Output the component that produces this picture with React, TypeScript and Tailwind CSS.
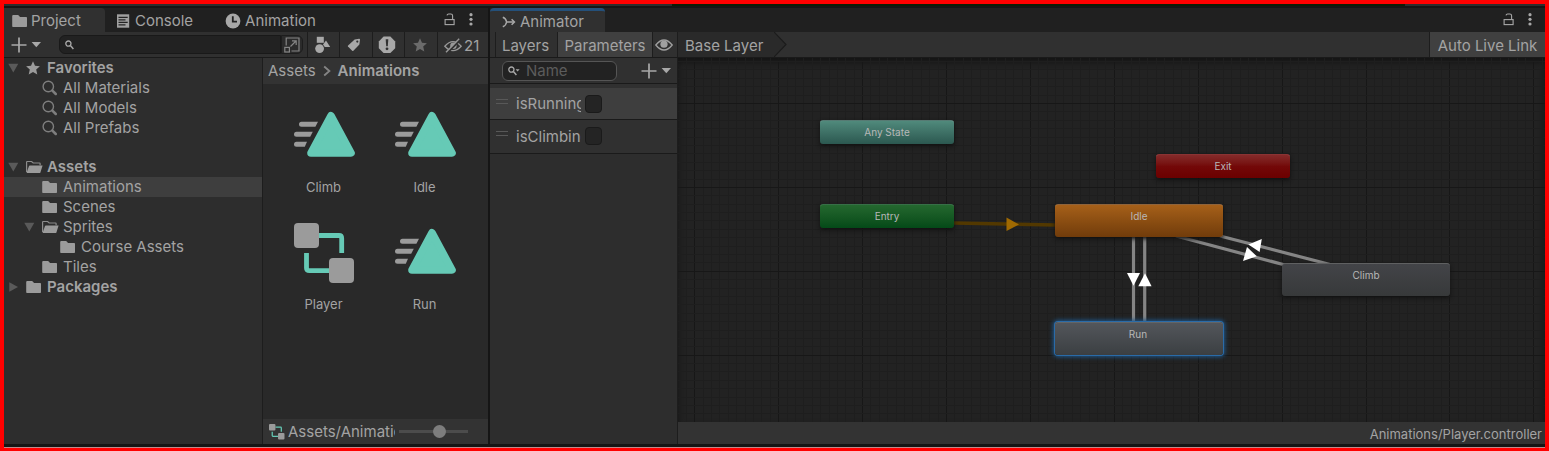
import type { ReactNode } from "react";

const FolderIcon = () => (
  <svg width="16" height="14" viewBox="0 0 16 14" fill="#9b9b9b">
    <path d="M0.2 2Q0.2 1 1.2 1H5.8Q6.4 1 6.8 1.5L8 3H14.2Q15 3 15 3.8V12.2Q15 13 14.2 13H1Q0.2 13 0.2 12.2Z" />
  </svg>
);

const FolderOpenIcon = () => (
  <svg width="17" height="14" viewBox="0 0 17 14" fill="none">
    <path d="M0.6 12V2Q0.6 1.5 1.1 1.5H5.6L7.2 3H13.6Q14.1 3 14.1 3.5V5.3" stroke="#8c8c8c" strokeWidth="1.2" />
    <path d="M3.8 5.5H16.6L14.4 12.4Q14.2 13 13.6 13H0.8Q0.5 13 0.8 12.2L3 6Q3.2 5.5 3.8 5.5Z" fill="#9b9b9b" />
  </svg>
);

const LensIcon = () => (
  <svg width="16" height="16" viewBox="0 0 16 16" fill="none" stroke="#7e7e7e">
    <circle cx="6.3" cy="6.5" r="5.2" strokeWidth="1.4" />
    <path d="M10.4 10.6L13.8 14" strokeWidth="2.5" strokeLinecap="round" />
  </svg>
);

const SmallLens = ({ caret = false }: { caret?: boolean }) => (
  <svg width="12" height="10" viewBox="0 0 12 10" fill="none" stroke="#a8a8a8" className="shrink-0">
    <circle cx="3.4" cy="3.6" r="2.6" strokeWidth="1.3" />
    <path d="M5.4 5.6L8.4 8.9" strokeWidth="1.5" />
    {caret && <path d="M7.6 3.2H11.6L9.6 5.4Z" fill="#a8a8a8" stroke="none" />}
  </svg>
);

const StarIcon = ({ fill }: { fill: string }) => (
  <svg width="16" height="16" viewBox="0 0 16 16" fill={fill}>
    <path d="M7 1.2L9 5.8L13.9 6.3L10.2 9.6L11.3 14.5L7 11.9L2.7 14.5L3.8 9.6L0.1 6.3L5 5.8Z" />
  </svg>
);

const PlusCaret = () => (
  <svg width="30" height="16" viewBox="0 0 30 16">
    <path d="M8 0.5V15.5M0.5 8H15.5" stroke="#a8a8a8" strokeWidth="1.7" />
    <path d="M20.6 5H30L25.3 10.2Z" fill="#a8a8a8" />
  </svg>
);

const LockIcon = () => (
  <svg width="12" height="14" viewBox="0 0 12 14" fill="none" stroke="#a8a8a8" strokeWidth="1.1">
    <rect x="1.1" y="6.6" width="9" height="5" />
    <path d="M3 2.4Q3.2 1 4.6 1H6.8Q8.6 1 8.6 2.8V6.5" />
  </svg>
);

const DotsIcon = () => (
  <svg width="6" height="14" viewBox="0 0 6 14" fill="#a8a8a8">
    <circle cx="3" cy="1.7" r="1.6" />
    <circle cx="3" cy="6.3" r="1.6" />
    <circle cx="3" cy="11" r="1.6" />
  </svg>
);

const ConsoleIcon = () => (
  <svg width="13" height="14" viewBox="0 0 13 14">
    <rect x="0" y="0.3" width="12.2" height="13.4" fill="#a0a0a0" />
    <path d="M1.5 3.3H10.7M1.5 5.8H8.5M1.5 8.3H10.7M1.5 10.8H8.5" stroke="#242424" strokeWidth="1.2" />
  </svg>
);

const ClockIcon = () => (
  <svg width="16" height="16" viewBox="0 0 16 16">
    <circle cx="8" cy="8" r="7.4" fill="#a8a8a8" />
    <path d="M7.8 3.3V8.6H12" fill="none" stroke="#222222" strokeWidth="1.8" />
  </svg>
);

const AnimatorIcon = () => (
  <svg width="14" height="12" viewBox="0 0 14 12" fill="none" stroke="#a8a8a8" strokeWidth="1.5">
    <path d="M0.8 1.2Q4 2.4 4.6 6Q4 9.6 0.8 10.8M4 6H12" />
    <path d="M9.6 3.2L12.4 6L9.6 8.8" />
  </svg>
);

const OpenWindowIcon = () => (
  <svg width="16" height="16" viewBox="0 0 16 16" fill="none" stroke="#858585" strokeWidth="1.2">
    <path d="M2.2 8.5V1H15V14H7.5" />
    <rect x="0.8" y="10.4" width="4.6" height="4.6" />
    <path d="M6.5 9.5L12 4M8 3.8H12.2V8" />
  </svg>
);

const ShapesIcon = () => (
  <svg width="16" height="18" viewBox="0 0 16 18" fill="#a8a8a8">
    <rect x="1.8" y="0.8" width="7" height="6" />
    <circle cx="4.6" cy="12.6" r="4.4" />
    <path d="M11 4.6L15.2 11H9.8L8 8.4Z" />
  </svg>
);

const TagIcon = () => (
  <svg width="14" height="14" viewBox="0 0 14 14">
    <path d="M7.6 1.4L12.2 0.8Q13 0.8 13 1.6L12.4 6.4L6.4 12.8Q5.8 13.4 5.2 12.8L1 8.6Q0.5 8 1.1 7.4Z" fill="#a8a8a8" />
    <circle cx="10.3" cy="3.6" r="1.1" fill="#303030" />
  </svg>
);

const AlertIcon = () => (
  <svg width="18" height="18" viewBox="0 0 18 18">
    <path d="M5.6 0.6H12.4L17.2 5.4V12.2L12.4 17H5.6L0.8 12.2V5.4Z" fill="#a8a8a8" />
    <path d="M7.7 3.2H10.3L9.8 10.2H8.2Z" fill="#303030" />
    <circle cx="9" cy="12.8" r="1.4" fill="#303030" />
  </svg>
);

const EyeIcon = () => (
  <svg width="18" height="12" viewBox="0 0 18 12">
    <path d="M0.8 6Q9 -4 17.2 6Q9 16 0.8 6Z" fill="none" stroke="#a0a0a0" strokeWidth="1.3" />
    <circle cx="9" cy="5.2" r="3.6" fill="#a0a0a0" />
  </svg>
);

const EyeOffIcon = () => (
  <svg width="18" height="16" viewBox="0 0 18 16">
    <path d="M0.8 8.2Q9 -1 17.2 8.2Q9 17 0.8 8.2Z" fill="none" stroke="#989898" strokeWidth="1.3" />
    <circle cx="9.4" cy="7.8" r="3.2" fill="#989898" />
    <path d="M3.2 15L16 2" stroke="#303030" strokeWidth="2" />
    <path d="M2 14.2L15.2 0.8" stroke="#989898" strokeWidth="1.4" />
  </svg>
);

const ClipIcon = () => (
  <svg width="62" height="62" viewBox="0 0 62 62">
    <g fill="#9b9b9b">
      <path d="M7.5 15.8H24L21.4 20.8H7.5A2.5 2.5 0 0 1 7.5 15.8Z" />
      <path d="M2.5 25.8H18.8L16.2 30.8H2.5A2.5 2.5 0 0 1 2.5 25.8Z" />
      <path d="M2.5 35.8H13L10.8 40.8H2.5A2.5 2.5 0 0 1 2.5 35.8Z" />
    </g>
    <path d="M37 9.8L57 47H17Z" fill="#66cab6" stroke="#66cab6" strokeWidth="7.6" strokeLinejoin="round" />
  </svg>
);

const ControllerIcon = ({ size }: { size: number }) => (
  <svg width={size} height={size} viewBox="0 0 62 62" className="shrink-0">
    <path d="M25 12.5H45Q47.7 12.5 47.7 15.5V30M12.5 30V45Q12.5 47.7 15.5 47.7H35" fill="none" stroke="#66cab6" strokeWidth="4.8" />
    <rect x="0" y="0" width="25" height="25" rx="4" fill="#9b9b9b" />
    <rect x="35" y="35" width="25" height="25" rx="4" fill="#9b9b9b" />
  </svg>
);

const Twisty = ({ state }: { state?: "open" | "closed" }) => (
  <svg width="18" height="10" viewBox="0 0 18 10" fill="#5a5a5a">
    {state === "open" && <path d="M0.3 0.8H10.3L5.3 9.6Z" />}
    {state === "closed" && <path d="M1.3 0.2V9.8L10 5Z" />}
  </svg>
);

type TreeItem = { label: string; pad: string; icon: ReactNode; state?: "open" | "closed"; bold?: boolean; selected?: boolean };

const favorites: TreeItem[] = [
  { label: "Favorites", pad: "pl-1", icon: <StarIcon fill="#9b9b9b" />, state: "open", bold: true },
  { label: "All Materials", pad: "pl-5", icon: <LensIcon /> },
  { label: "All Models", pad: "pl-5", icon: <LensIcon /> },
  { label: "All Prefabs", pad: "pl-5", icon: <LensIcon /> },
];

const assets: TreeItem[] = [
  { label: "Assets", pad: "pl-1", icon: <FolderOpenIcon />, state: "open", bold: true },
  { label: "Animations", pad: "pl-5", icon: <FolderIcon />, selected: true },
  { label: "Scenes", pad: "pl-5", icon: <FolderIcon /> },
  { label: "Sprites", pad: "pl-5", icon: <FolderOpenIcon />, state: "open" },
  { label: "Course Assets", pad: "pl-[38px]", icon: <FolderIcon /> },
  { label: "Tiles", pad: "pl-5", icon: <FolderIcon /> },
  { label: "Packages", pad: "pl-1", icon: <FolderIcon />, state: "closed", bold: true },
];

const Tree = ({ items, label }: { items: TreeItem[]; label: string }) => (
  <ul aria-label={label}>
    {items.map((item) => (
      <li key={item.label}>
        <button className={`flex h-5 w-full items-center ${item.pad} ${item.selected ? "bg-[#3e3e3e]" : ""}`}>
          <Twisty state={item.state} />
          <span className="flex w-[21px] shrink-0">{item.icon}</span>
          <span className={item.bold ? "font-semibold" : ""}>{item.label}</span>
        </button>
      </li>
    ))}
  </ul>
);

const clips = [
  { label: "Climb", icon: <ClipIcon /> },
  { label: "Idle", icon: <ClipIcon /> },
  { label: "Player", icon: <ControllerIcon size={62} /> },
  { label: "Run", icon: <ClipIcon /> },
];

const ProjectPanel = () => (
  <section className="flex w-[486px] shrink-0 flex-col border-r-2 border-[#151515]">
    <header className="flex h-6 items-stretch bg-[#202020]">
      <button className="flex w-[101px] items-center gap-[3px] rounded-tr bg-[#303030] pl-2 pr-4 pt-[2px]">
        <FolderIcon />
        Project
      </button>
      <button className="ml-3 flex items-center gap-[5px] pt-[2px]">
        <ConsoleIcon />
        Console
      </button>
      <button className="ml-8 flex items-center gap-1 pt-[2px]">
        <ClockIcon />
        Animation
      </button>
      <div className="ml-auto flex items-center gap-3 pr-[14px]">
        <button aria-label="Lock"><LockIcon /></button>
        <button aria-label="Panel menu"><DotsIcon /></button>
      </div>
    </header>

    <div className="flex h-[26px] items-stretch border-b border-[#1a1a1a] bg-[#303030]">
      <button aria-label="Create" className="flex w-[55px] shrink-0 items-center pl-[7px]">
        <PlusCaret />
      </button>
      <label className="my-[3px] flex min-w-0 flex-1 items-center rounded-l-md border border-[#191919] bg-[#222222] pl-[5px]">
        <SmallLens />
        <input aria-label="Search assets" className="min-w-0 flex-1 bg-transparent px-1 outline-none" />
      </label>
      <button aria-label="Open search window" className="my-[3px] mr-1 flex w-[22px] items-center justify-center rounded-r-md border border-[#1d1d1d] bg-[#2b2b2b]">
        <OpenWindowIcon />
      </button>
      <button aria-label="Filter by type" className="flex w-8 items-center border-l border-[#1d1d1d] pl-[7px]"><ShapesIcon /></button>
      <button aria-label="Filter by label" className="flex w-[33px] items-center border-l border-[#1d1d1d] pl-[7px]"><TagIcon /></button>
      <button aria-label="Filter by log" className="flex w-8 items-center border-l border-[#1d1d1d] pl-[5px]"><AlertIcon /></button>
      <button aria-label="Save search" className="flex w-[33px] items-center border-l border-[#1d1d1d] pl-2"><StarIcon fill="#6b6b6b" /></button>
      <button aria-label="Hidden packages" className="flex w-[51px] items-center border-l border-[#1d1d1d] pl-[6px] pt-[2px]">
        <EyeOffIcon />
        <span className="ml-[2px]">21</span>
      </button>
    </div>

    <div className="flex flex-1">
      <nav className="flex w-[259px] shrink-0 flex-col gap-[19px] border-r border-[#1d1d1d] bg-[#2d2d2d]">
        <Tree items={favorites} label="Favorites" />
        <Tree items={assets} label="Project folders" />
      </nav>
      <div className="flex min-w-0 flex-1 flex-col bg-[#292929]">
        <div className="flex h-[26px] items-center gap-[7px] bg-[#333333] pl-[5px]">
          <a href="#assets">Assets</a>
          <svg width="8" height="12" viewBox="0 0 8 12" fill="none" stroke="#858585" strokeWidth="1.8">
            <path d="M1.2 1.5L6.4 6L1.2 10.5" />
          </svg>
          <a href="#animations" className="font-semibold">Animations</a>
        </div>
        <ul className="grid flex-1 grid-cols-[101px_101px] content-start gap-y-2 pl-[11px] pt-[22px] text-[13px] leading-4">
          {clips.map((clip) => (
            <li key={clip.label}>
              <button className="flex h-[109px] w-full flex-col items-center gap-[11px]">
                {clip.icon}
                <span className="pr-[2px]">{clip.label}</span>
              </button>
            </li>
          ))}
        </ul>
        <footer className="flex h-[25px] items-center bg-[#333333] pl-[6px] pr-5">
          <ControllerIcon size={16} />
          <span className="ml-[3px] mr-[2px] min-w-0 flex-1 overflow-hidden whitespace-nowrap">Assets/Animations</span>
          <input
            type="range"
            aria-label="Icon size"
            defaultValue={60}
            className="ml-[2px] h-[13px] w-[69px] shrink-0 appearance-none bg-transparent [&::-webkit-slider-runnable-track]:h-[3px] [&::-webkit-slider-runnable-track]:bg-[#4c4c4c] [&::-webkit-slider-thumb]:-mt-[5px] [&::-webkit-slider-thumb]:h-[13px] [&::-webkit-slider-thumb]:w-[13px] [&::-webkit-slider-thumb]:appearance-none [&::-webkit-slider-thumb]:rounded-full [&::-webkit-slider-thumb]:bg-[#7d7d7d]"
          />
        </footer>
      </div>
    </div>
  </section>
);

const parameters = [
  { name: "isRunning", row: "border-b border-[#1a1a1a] bg-[#3e3e3e]" },
  { name: "isClimbing", row: "" },
];

const nodes = [
  { label: "Any State", box: "left-[142px] top-[62px] h-6 w-[134px] from-[#508a7c] to-[#2c5850]" },
  { label: "Entry", box: "left-[142px] top-[146px] h-6 w-[134px] from-[#24682f] to-[#044a18]" },
  { label: "Exit", box: "left-[478px] top-[96px] h-6 w-[134px] from-[#842a2a] via-[#730808] to-[#6c0000]" },
  { label: "Idle", box: "left-[377px] top-[146px] h-[33px] w-[168px] from-[#a66019] to-[#713c0b]" },
  { label: "Climb", box: "left-[604px] top-[205px] h-[33px] w-[168px] from-[#434448] to-[#37393a]" },
];

const selectedNode = { label: "Run", box: "left-[377px] top-[264px] h-[33px] w-[168px] from-[#53565b] to-[#3b3f42]" };

const range = (count: number) => Array.from({ length: count }, (_, i) => i);

const GraphBackdrop = () => (
  <svg className="absolute inset-0 h-full w-full" aria-hidden="true">
    {range(240).map((i) => {
      const x = Math.round(16.3 + (i - 1) * 8.39) + 0.5;
      return <line key={`x${i}`} x1={x} x2={x} y1="0" y2="100%" stroke={i % 10 === 1 ? "#171717" : "#1e1e1e"} />;
    })}
    {range(120).map((i) => {
      const y = Math.round(45 + (i - 5) * 8.39) + 0.5;
      return <line key={`y${i}`} x1="0" x2="100%" y1={y} y2={y} stroke={i % 10 === 5 ? "#171717" : "#1e1e1e"} />;
    })}
    <path d="M276 165L377 167" stroke="#523800" strokeWidth="3.4" />
    <path d="M328.5 159.5V173L341 166.5Z" fill="#a06a02" />
    <g stroke="#858585" strokeWidth="3.2">
      <path d="M455.5 179V264M466.7 179V264M498 178L607 207M542 178L654 207" />
    </g>
    <g fill="#ffffff">
      <path d="M449 215H462L455.5 227.8Z" />
      <path d="M460.3 228.2H473.6L467 215.3Z" />
      <path d="M565 203L569 189L578.8 198.3Z" />
      <path d="M570.4 186.6L583.8 181L581.6 194Z" />
    </g>
  </svg>
);

const nodeBase =
  "absolute flex items-start justify-center rounded-[3px] border-t border-white/20 bg-linear-to-b pt-1 text-[10px] leading-[14px] text-[#b8b8b8]";

const AnimatorPanel = () => (
  <section className="flex min-w-0 flex-1 flex-col">
    <header className="flex h-6 items-stretch bg-[#202020]">
      <button className="flex w-[115px] items-center gap-1 rounded-t border-t-[3px] border-[#24507a] bg-[#303030] pl-3">
        <AnimatorIcon />
        Animator
      </button>
      <div className="ml-auto flex items-center gap-3 pr-3">
        <button aria-label="Lock"><LockIcon /></button>
        <button aria-label="Panel menu"><DotsIcon /></button>
      </div>
    </header>

    <div className="flex h-[26px] items-stretch border-b border-[#1a1a1a] bg-[#303030]">
      <button className="ml-[5px] w-[62px] border-l border-[#1d1d1d] pr-[2px] pt-[2px]">Layers</button>
      <button className="w-24 border-x border-[#1d1d1d] bg-[#404040] pt-[2px]">Parameters</button>
      <button aria-label="Toggle side panel" className="flex w-6 items-center pl-[2px]"><EyeIcon /></button>
      <button className="border-l border-[#1d1d1d] bg-[#2a2a2a] pl-[7px] pr-[11px] pt-[2px]">Base Layer</button>
      <svg width="14" height="25" viewBox="0 0 14 25">
        <path d="M0 0L12 12.5L0 25Z" fill="#2a2a2a" />
        <path d="M0 0L12 12.5L0 25" fill="none" stroke="#1c1c1c" strokeWidth="1.2" />
      </svg>
      <button className="ml-auto w-[116px] border-l border-[#1d1d1d] bg-[#404040] pt-[2px]">Auto Live Link</button>
    </div>

    <div className="flex flex-1">
      <aside className="w-[188px] shrink-0 border-r border-[#1d1d1d] bg-[#2d2d2d]">
        <div className="flex h-[26px] items-center justify-between border-b border-[#1a1a1a] bg-[#303030] pl-3 pr-[6px]">
          <label className="flex h-5 w-[115px] items-center rounded-md border border-[#555555] bg-[#222222] pl-[5px]">
            <SmallLens caret />
            <input aria-label="Parameter name" placeholder="Name" className="ml-[6px] w-20 bg-transparent outline-none placeholder:text-[#5c5c5c]" />
          </label>
          <button aria-label="Add parameter"><PlusCaret /></button>
        </div>
        <ul className="border-b border-[#1a1a1a] bg-[#303030] pb-px pt-1">
          {parameters.map((p) => (
            <li key={p.name}>
              <label className={`flex h-8 items-center pl-[6px] ${p.row}`}>
                <svg width="12" height="16" viewBox="0 0 12 16" stroke="#585858">
                  <path d="M0 3.5H12M0 7.5H12" />
                </svg>
                <span className="ml-2 w-[65px] overflow-hidden whitespace-nowrap pt-px">{p.name}</span>
                <input type="checkbox" className="ml-1 h-[18px] w-[17px] appearance-none rounded-sm border border-[#1a1a1a] bg-[#242424]" />
              </label>
            </li>
          ))}
        </ul>
      </aside>

      <div className="flex min-w-0 flex-1 flex-col">
        <div className="relative min-h-[320px] flex-1 overflow-hidden bg-[#222222] shadow-[inset_0_4px_6px_#141414]">
          <GraphBackdrop />
          {nodes.map((node) => (
            <button key={node.label} className={`${nodeBase} shadow-[0_2px_4px_#111111] ${node.box}`}>
              {node.label}
            </button>
          ))}
          <button className={`${nodeBase} shadow-[0_0_0_1px_#2a6ba8,0_0_4px_2px_#1f5688] ${selectedNode.box}`}>
            <span className="pr-[2px]">{selectedNode.label}</span>
          </button>
        </div>
        <footer className="flex h-[22px] items-center justify-end bg-[#333333] pr-[3px] pt-[2px] text-[13px] leading-4">
          Animations/Player.controller
        </footer>
      </div>
    </div>
  </section>
);

export default function App() {
  return (
    <main className="flex min-h-screen flex-col border-4 border-b-[3px] border-[#ff0000] bg-[#151515] font-['Inter',sans-serif] text-[15px] leading-5 text-[#a3a3a3]">
      <div className="mb-[2px] flex h-[2px] bg-[#2d2d2d]">
        <div className="ml-[668px] mr-[140px] flex-1 bg-[#0c1d06]" />
      </div>
      <div className="flex flex-1 border-b-[3px] border-[#151515]">
        <ProjectPanel />
        <AnimatorPanel />
      </div>
      <div className="h-px bg-[#c08a8a]" />
    </main>
  );
}
